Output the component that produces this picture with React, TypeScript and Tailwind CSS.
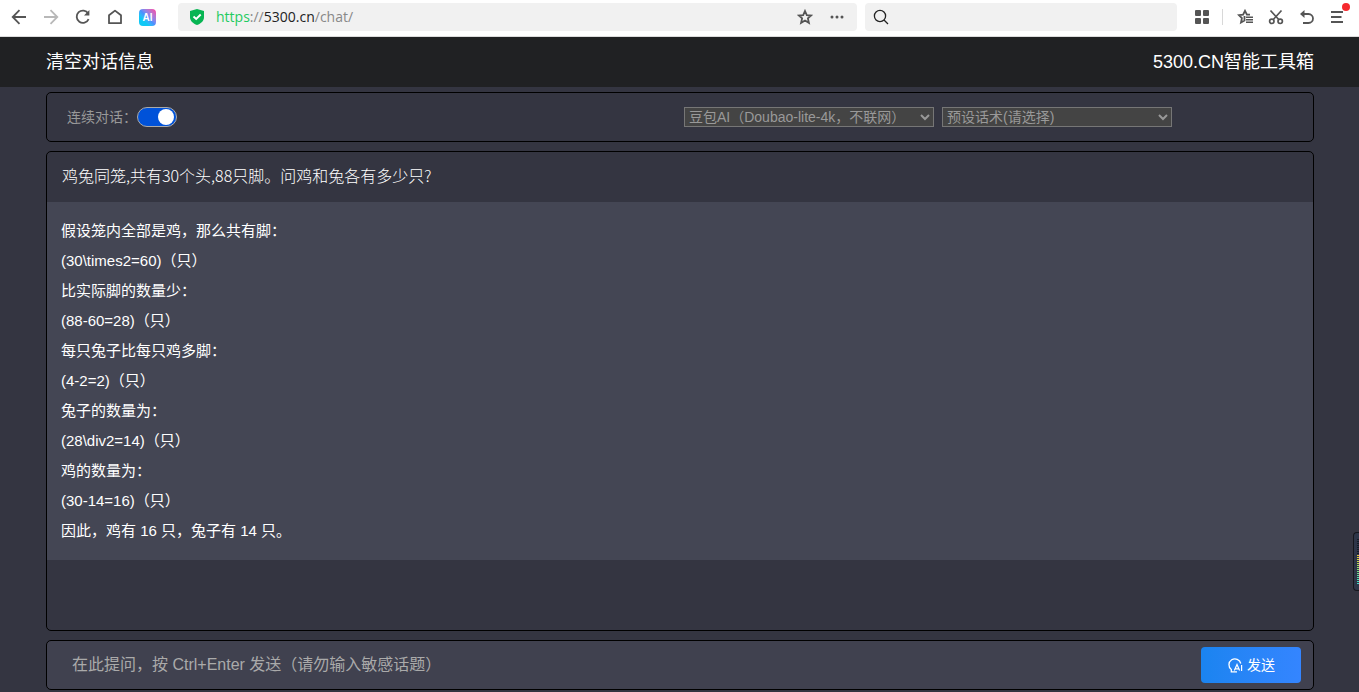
import { useState } from "react";

const answerLines = [
    "假设笼内全部是鸡，那么共有脚：",
    "(30\\times2=60)（只）",
    "比实际脚的数量少：",
    "(88-60=28)（只）",
    "每只兔子比每只鸡多脚：",
    "(4-2=2)（只）",
    "兔子的数量为：",
    "(28\\div2=14)（只）",
    "鸡的数量为：",
    "(30-14=16)（只）",
    "因此，鸡有 16 只，兔子有 14 只。",
];

// 音量条从上到下的颜色
const meterColors = [
    "#151a26", "#151a26", "#151a26", "#151a26", "#151a26", "#151a26", "#151a26", "#151a26",
    "#e8c832", "#e0cc38", "#d4d040", "#c8d448", "#b8d850", "#a8dc58", "#98dc64", "#88dc70",
    "#78dc80", "#6cdc8c", "#60dc98", "#54dca4", "#4cdcb0", "#44dcbc", "#40dcc8",
];

function BrowserBar() {
    return (
        <div className="flex h-[37px] items-start border-b border-[#dcdcdc] bg-white pt-[3px] text-[#555]">
            {/* 导航按钮 */}
            <div className="flex h-7 w-[178px] shrink-0 items-center gap-4 pl-[11px]">
                <button aria-label="后退" className="size-4">
                    <svg viewBox="0 0 16 16" className="size-4" fill="none" stroke="currentColor" strokeWidth="1.8">
                        <path d="M15 8H2M8.500 1.200L1.700 8l6.800 6.800" />
                    </svg>
                </button>
                <button aria-label="前进" className="size-4 text-[#b8b8b8]">
                    <svg viewBox="0 0 16 16" className="size-4" fill="none" stroke="currentColor" strokeWidth="1.8">
                        <path d="M1 8h13M7.500 1.200L14.300 8l-6.800 6.800" />
                    </svg>
                </button>
                <button aria-label="刷新" className="size-4">
                    <svg viewBox="0 0 16 16" className="size-4" fill="none" stroke="currentColor" strokeWidth="1.8">
                        <path d="M13.600 10.200A6.200 6.200 0 1 1 13.200 4.500" />
                        <path d="M14.400 1v5.500H9z" fill="currentColor" stroke="none" />
                    </svg>
                </button>
                <button aria-label="主页" className="size-4">
                    <svg viewBox="0 0 16 16" className="size-4" fill="none" stroke="currentColor" strokeWidth="1.8" strokeLinejoin="round">
                        <path d="M2 14.200V6.300L8 1.600l6 4.700v7.900z" />
                    </svg>
                </button>
                <button
                    aria-label="AI 助手"
                    className="flex size-[17px] items-center justify-center rounded bg-linear-to-tr from-[#10c8f5] from-30% via-[#4a90ff] to-[#ff2fa0] text-[10px] font-bold text-white"
                >
                    AI
                </button>
            </div>

            {/* 地址栏 */}
            <div className="min-w-0 flex-[679]">
                <div className="flex h-7 items-center rounded bg-[#f1f1f1] px-3">
                    <svg viewBox="0 0 14 16" className="h-4 w-3.5 shrink-0">
                        <path d="M7 0l7 2v6c0 4-3 6.500-7 8-4-1.500-7-4-7-8V2z" fill="#07b553" />
                        <path d="M3.500 7.500L6.200 10l4.500-4.500" fill="none" stroke="#fff" strokeWidth="1.900" />
                    </svg>
                    <p className="ml-3 flex-1 font-['Open_Sans',sans-serif] text-sm leading-7 text-[#888]">
                        <span className="text-[#1fcb61]">https</span>://<span className="text-[#222]">5300.cn</span>/chat/
                    </p>
                    <button aria-label="收藏">
                        <svg viewBox="0 0 16 16" className="size-4" fill="none" stroke="currentColor" strokeWidth="1.8">
                            <path d="M8 2l1.800 4.100 4.400.4-3.300 2.900 1 4.400L8 11.500l-3.900 2.300 1-4.400L1.800 6.500l4.400-.4z" />
                        </svg>
                    </button>
                    <button aria-label="更多" className="ml-4">
                        <svg viewBox="0 0 16 16" className="size-4" fill="currentColor">
                            <circle cx="3" cy="8" r="1.500" />
                            <circle cx="8" cy="8" r="1.500" />
                            <circle cx="13" cy="8" r="1.500" />
                        </svg>
                    </button>
                </div>
            </div>

            {/* 搜索框 */}
            <div className="ml-2 min-w-0 flex-[312]">
                <div className="flex h-7 items-center rounded bg-[#f1f1f1] px-2">
                    <svg viewBox="0 0 16 16" className="size-4 shrink-0" fill="none" stroke="#222" strokeWidth="1.300">
                        <circle cx="7" cy="7" r="5.600" />
                        <path d="M11 11l4 4" />
                    </svg>
                    <input aria-label="搜索" className="h-7 w-full min-w-0 bg-transparent px-2 text-sm text-[#222] outline-none" />
                </div>
            </div>

            <div className="flex h-7 w-[182px] shrink-0 items-center pl-[17px]">
                <button aria-label="应用">
                    <svg viewBox="0 0 16 16" className="size-4" fill="currentColor">
                        <rect x="1" y="1" width="6" height="6" rx="1" />
                        <rect x="9" y="1" width="6" height="6" rx="1" />
                        <rect x="1" y="9" width="6" height="6" rx="1" />
                        <rect x="9" y="9" width="6" height="6" rx="1" />
                    </svg>
                </button>
                <span className="mr-[14px] ml-3 h-4 w-px bg-[#d8d8d8]" />
                <div className="flex items-center gap-[15px]">
                    <button aria-label="收藏夹">
                        <svg viewBox="0 0 16 16" className="size-4" fill="none" stroke="currentColor" strokeWidth="1.800">
                            <path d="M13 5.600H9.900L8 1.800 6.100 5.600 1.800 6.100l3.100 3-.9 4.500 3.500-2V7" />
                            <path d="M9 8.200h7M9 10.700h7M9 13.200h7" strokeWidth="1.500" />
                        </svg>
                    </button>
                    <button aria-label="截图">
                        <svg viewBox="0 0 16 16" className="size-4" fill="none" stroke="currentColor" strokeWidth="1.700">
                            <circle cx="3.800" cy="12.300" r="2.200" />
                            <circle cx="12.200" cy="12.300" r="2.200" />
                            <path d="M2.500 1.500l8.200 9M13.500 1.500l-8.200 9" />
                        </svg>
                    </button>
                    <button aria-label="撤销">
                        <svg viewBox="0 0 16 16" className="size-4" fill="none" stroke="currentColor" strokeWidth="1.800">
                            <path d="M2 5h7.500a4.500 4.500 0 0 1 0 9H4" />
                            <path d="M5.500 1v8L1 5z" fill="currentColor" stroke="none" />
                        </svg>
                    </button>
                    <button aria-label="菜单" className="relative">
                        <svg viewBox="0 0 16 16" className="size-4" stroke="currentColor" strokeWidth="1.800">
                            <path d="M1 3h12M1 8h10.500M1 13h12" />
                        </svg>
                        <span className="absolute -top-1.5 -right-1 size-2 rounded-full bg-[#f5292e]" />
                    </button>
                </div>
            </div>
        </div>
    );
}

function SendIcon() {
    return (
        <svg viewBox="0 0 16 16" className="size-4" fill="none" stroke="currentColor" strokeWidth="1.300">
            <path d="M13.800 6.500A6 6 0 1 0 4.300 12.600V14.900H10" />
            <path d="M7.300 13.500L10 7.500 12.600 13.500M8.500 11.800h3.200M14.600 8v6" strokeWidth="1.200" />
        </svg>
    );
}

export default function App() {
    const [keepContext, setKeepContext] = useState(true);
    const [question, setQuestion] = useState("");

    return (
        <div lang="zh-CN" className="min-h-screen bg-[#343541] font-['Liberation_Sans','Noto_Sans_CJK_SC',sans-serif]">
            <BrowserBar />

            <header className="flex h-[50px] items-center justify-between bg-[#202123] pr-[45px] pl-[46px] text-lg text-white">
                <button>清空对话信息</button>
                <h1>5300.CN智能工具箱</h1>
            </header>

            <main className="pt-[5px] pr-[45px] pb-[2px] pl-[46px]">
                {/* 设置 */}
                <section className="flex h-[50px] items-center rounded-[5px] border border-black text-sm text-[#999]">
                    <label className="flex w-1/2 items-center pl-5">
                        连续对话：
                        <span className="relative flex">
                            <input
                                type="checkbox"
                                role="switch"
                                checked={keepContext}
                                onChange={(e) => setKeepContext(e.target.checked)}
                                className="peer h-5 w-10 appearance-none rounded-full border border-[#aaa] bg-[#555] checked:bg-[#0052d9]"
                            />
                            <span className="pointer-events-none absolute top-0.5 left-0.5 size-4 rounded-full bg-white peer-checked:left-[21px]" />
                        </span>
                    </label>
                    <div className="flex w-1/2 gap-2 pl-1">
                        <select aria-label="模型" className="h-5 w-[250px] border border-[#767676] bg-[#444]">
                            <option>豆包AI（Doubao-lite-4k，不联网）</option>
                        </select>
                        <select aria-label="预设话术" className="h-5 w-[230px] border border-[#767676] bg-[#444]">
                            <option>预设话术(请选择)</option>
                        </select>
                    </div>
                </section>

                {/* 对话内容 */}
                <section className="mt-[9px] min-h-[480px] rounded-[5px] border border-black text-white">
                    <p className="h-[50px] px-[15px] font-['Noto_Sans_CJK_SC',sans-serif] text-base leading-[46px] font-light">
                        鸡兔同笼,共有30个头,88只脚。问鸡和兔各有多少只?
                    </p>
                    <div className="bg-[#444654] p-[14px] text-[15px] leading-[30px]">
                        {answerLines.map((line) => (
                            <p key={line}>{line}</p>
                        ))}
                    </div>
                </section>

                {/* 输入框 */}
                <form
                    onSubmit={(e) => e.preventDefault()}
                    className="mt-[9px] flex h-[50px] items-center rounded-[5px] border border-black bg-[#40414f] pr-3 pl-[25px]"
                >
                    <input
                        aria-label="提问"
                        value={question}
                        onChange={(e) => setQuestion(e.target.value)}
                        placeholder="在此提问，按 Ctrl+Enter 发送（请勿输入敏感话题）"
                        className="h-9 min-w-0 flex-1 text-base text-white outline-none placeholder:text-[#aaa]"
                    />
                    <button className="flex h-9 w-[100px] items-center justify-center gap-1 rounded bg-linear-to-r from-[#1a84f0] to-[#3485ff] text-sm text-white">
                        <SendIcon />
                        发送
                    </button>
                </form>
            </main>

            {/* 悬浮音量条 */}
            <div className="fixed right-0 bottom-[101px] h-[59px] w-[6px] rounded-l border border-r-0 border-[#15161d] bg-[#2d3548] py-1.5 pl-[3px]">
                <svg viewBox="0 0 2 46" className="h-[46px] w-0.5">
                    {meterColors.map((color, i) => (
                        <rect key={i} y={i * 2} width="2" height="1" fill={color} />
                    ))}
                </svg>
            </div>
        </div>
    );
}
